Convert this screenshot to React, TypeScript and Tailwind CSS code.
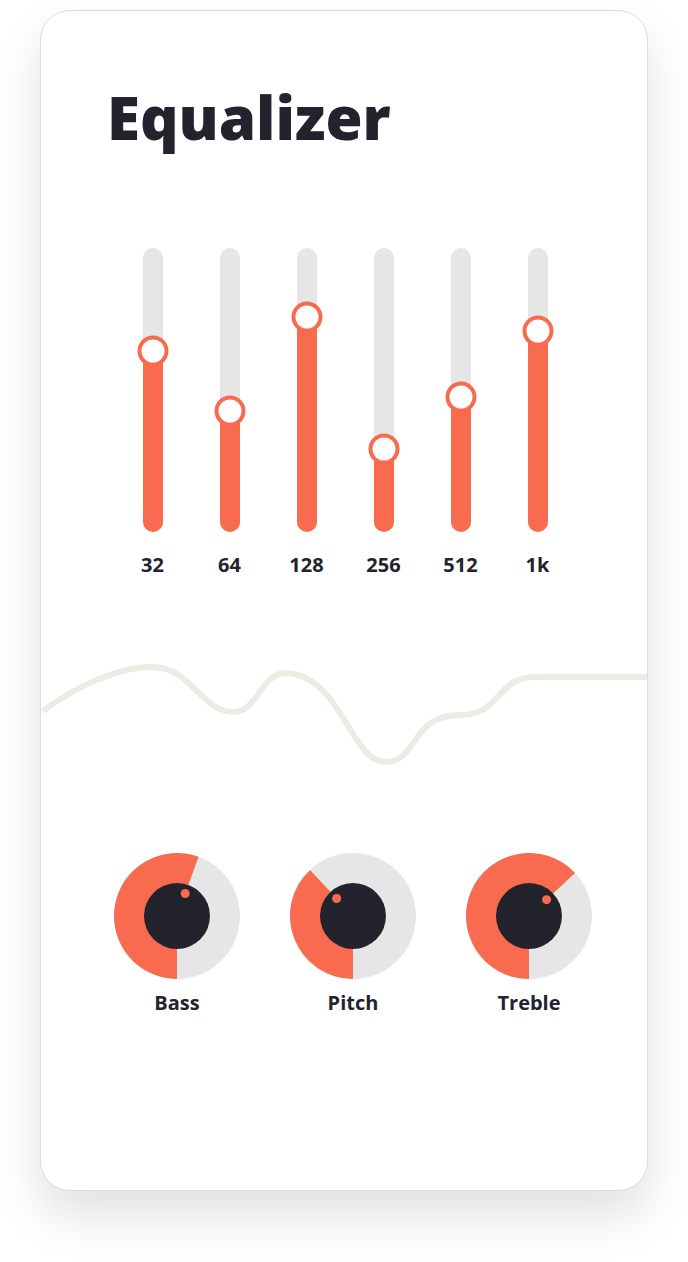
import React from "react";

const ORANGE = "#f86b4f";
const GRAY = "#e6e6e6";
const DARK = "#22232d";

const bands = [
  { label: "32", fill: 181 },
  { label: "64", fill: 121 },
  { label: "128", fill: 215 },
  { label: "256", fill: 83 },
  { label: "512", fill: 135 },
  { label: "1k", fill: 201 },
];

const knobs = [
  { label: "Bass", angle: 20 },
  { label: "Pitch", angle: 317 },
  { label: "Treble", angle: 47 },
];

const pt = (deg: number, r: number, c = 63) => {
  const a = (deg * Math.PI) / 180;
  return [c + r * Math.sin(a), c - r * Math.cos(a)];
};

const Knob = ({ angle }: { angle: number }) => {
  // orange wedge runs clockwise from 6 o'clock up to the knob angle
  const end = angle < 180 ? angle + 360 : angle;
  const sweep = end - 180;
  const [ex, ey] = pt(end, 63);
  const [dx, dy] = pt(end, 24);
  return (
    <svg width="126" height="126" viewBox="0 0 126 126">
      <circle cx="63" cy="63" r="63" fill={GRAY} />
      <path
        d={`M63,63 L63,126 A63,63 0 ${sweep > 180 ? 1 : 0} 1 ${ex},${ey} Z`}
        fill={ORANGE}
      />
      <circle cx="63" cy="63" r="33" fill={DARK} />
      <circle cx={dx} cy={dy} r="4.5" fill={ORANGE} />
    </svg>
  );
};

const App = () => {
  return (
    <div className="min-h-[1262px] bg-white pl-10 pt-[10px] font-['Open_Sans',sans-serif]">
      <div className="h-[1181px] w-[608px] overflow-hidden rounded-[30px] border border-[#dcdcdc] bg-white shadow-[0_25px_50px_rgba(0,0,0,0.12)]">
        <h1 className="pl-[66px] pt-[76px] text-[60px] font-extrabold leading-none text-[#22232d]">
          Equalizer
        </h1>

        {/* band sliders */}
        <div className="mt-[101px] flex pl-[73px]">
          {bands.map((b) => (
            <div key={b.label} className="flex w-[77px] flex-col items-center">
              <div className="relative h-[284px] w-5 rounded-full bg-[#e6e6e6]">
                <div
                  className="absolute bottom-0 left-0 w-5 rounded-b-full bg-[#f86b4f]"
                  style={{ height: b.fill }}
                />
                <div
                  className="absolute left-1/2 h-[31px] w-[31px] -translate-x-1/2 translate-y-1/2 rounded-full border-4 border-[#f86b4f] bg-white"
                  style={{ bottom: b.fill }}
                />
              </div>
              <span className="mt-[19px] text-[20px] font-bold leading-7 text-[#22232d]">
                {b.label}
              </span>
            </div>
          ))}
        </div>

        {/* response curve */}
        <svg className="mt-[71px] block" width="608" height="130" viewBox="0 0 608 130">
          <path
            d="M2,61 C45,29 85,17 111,17 C150,17 160,62 193,62 C216,62 220,23 245,23 C300,25 310,112 344,112 C378,112 368,65 420,65 C460,65 455,27 494,27 L608,27"
            fill="none"
            stroke="#ecece5"
            strokeWidth="6"
          />
        </svg>

        {/* knobs */}
        <div className="mt-[73px] flex gap-[50px] pl-[73px]">
          {knobs.map((k) => (
            <div key={k.label} className="flex w-[126px] flex-col items-center">
              <Knob angle={k.angle} />
              <span className="mt-[10px] text-[20px] font-bold leading-7 text-[#22232d]">
                {k.label}
              </span>
            </div>
          ))}
        </div>
      </div>
    </div>
  );
};

export default App;
